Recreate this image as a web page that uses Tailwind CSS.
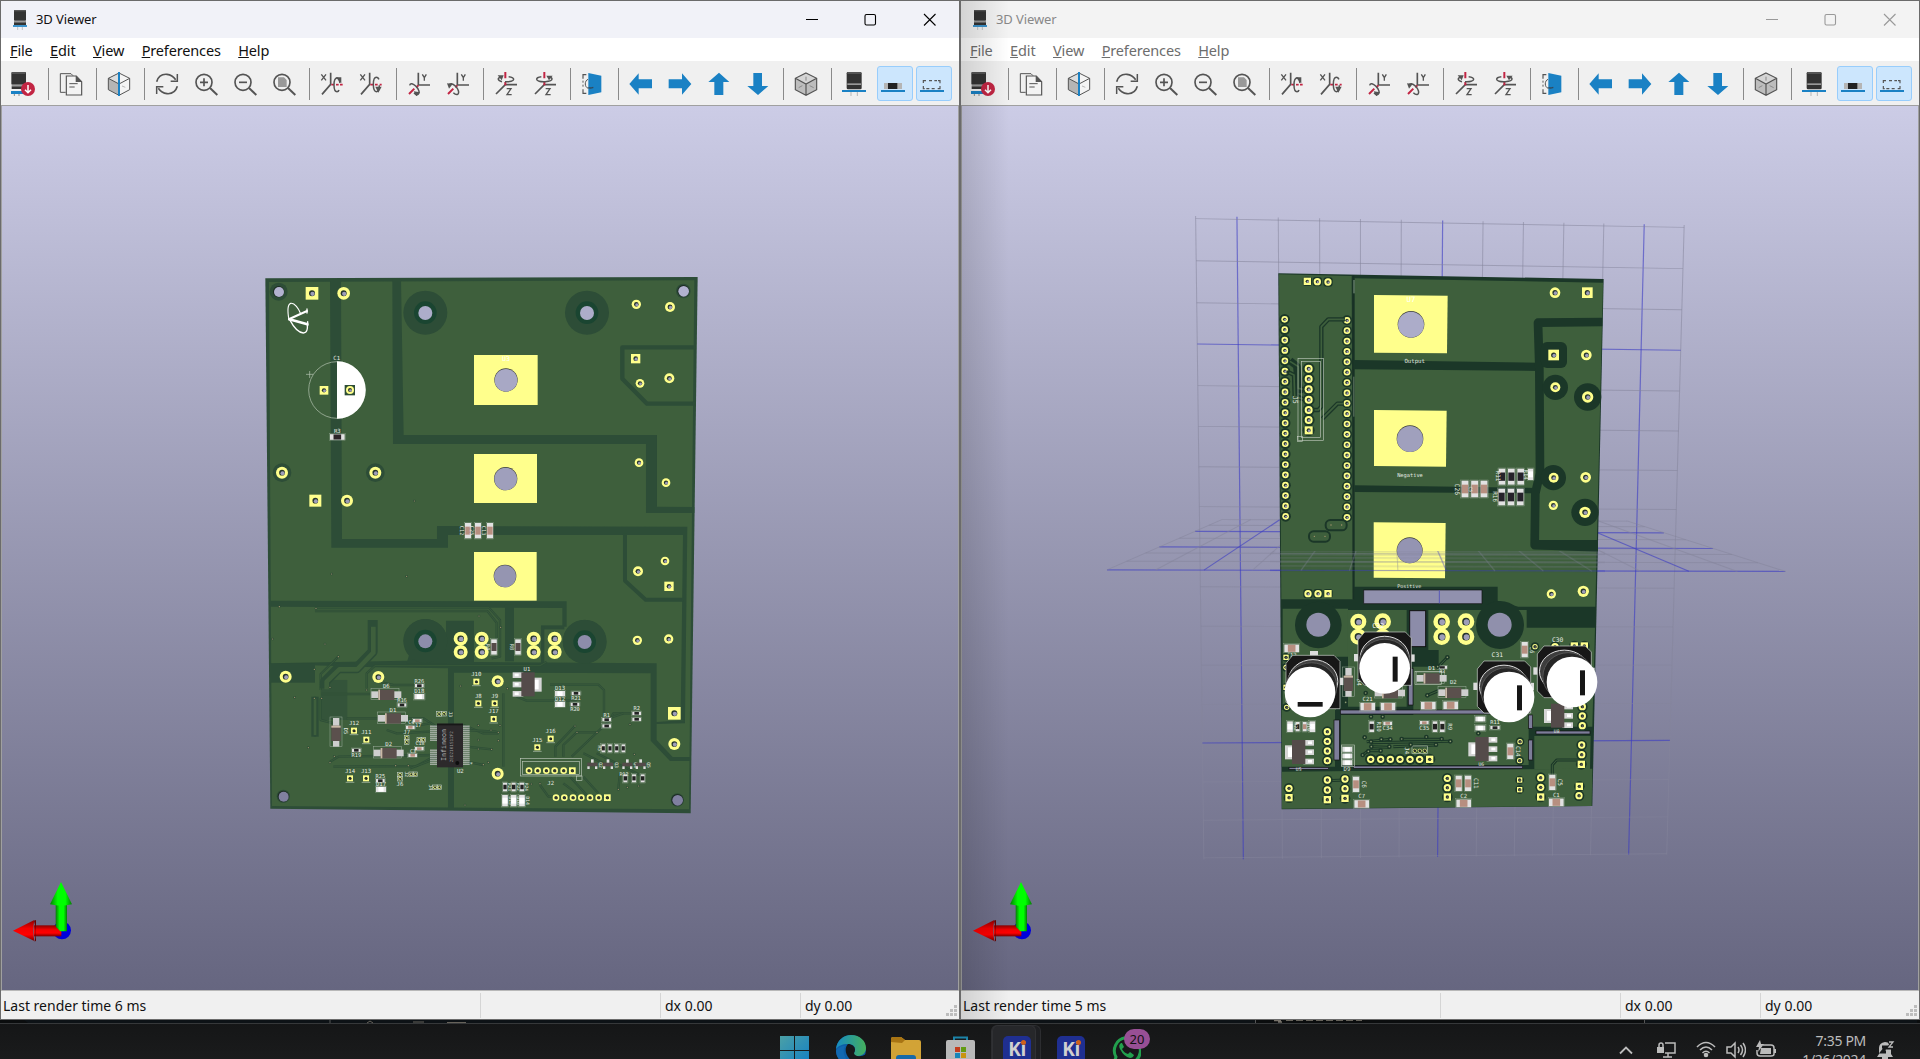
<!DOCTYPE html>
<html lang="en">
<head>
<meta charset="utf-8">
<title>3D Viewer</title>
<script src="https://cdn.jsdelivr.net/npm/@tailwindcss/browser@4"></script>
</head>
<body class="w-[1920px] h-[1059px] overflow-hidden bg-[#17181a] font-['Noto_Sans','Open_Sans',sans-serif]">
<template id="toolbar">
<!-- reload board -->
<svg class="w-6 h-6 mr-[15px] shrink-0 overflow-visible" viewBox="0 0 72 72"><rect x="1" y="0" width="44" height="38" rx="3" fill="#333"/><rect x="3" y="0" width="40" height="6" fill="#555"/><rect x="2" y="38" width="42" height="5" fill="#999"/><rect x="2" y="43" width="42" height="8" fill="#333"/><rect x="0" y="57" width="38" height="9" fill="#1a81c4"/><path d="M10 66v6M24 66v6" stroke="#888" stroke-width="3"/><circle cx="51" cy="51" r="21" fill="#c22543"/><path d="M51 39v22M42 53l9 9 9-9" stroke="#fff" stroke-width="4.5" fill="none"/></svg>
<i class="-ml-[2px] mr-[10px] w-px h-8 bg-[#8a8a8a] shrink-0"></i>
<svg class="w-6 h-6 mr-[15px] shrink-0" viewBox="0 0 72 72"><path d="M20 61H4V5h32l6 6" fill="none" stroke="#545454" stroke-width="3"/><path d="M22 12h30l16 17v40H22z" fill="#f3f3f3" stroke="#545454" stroke-width="3.5"/><path d="M50 11v19h19z" fill="#545454"/><path d="M31 35h25M31 45h16" stroke="#545454" stroke-width="3"/></svg>
<i class="-ml-[2px] mr-[10px] w-px h-8 bg-[#8a8a8a] shrink-0"></i>
<svg class="w-6 h-6 mr-[15px] shrink-0" viewBox="0 0 72 72"><path d="M36 3L4 19v34l32 17z" fill="#b5b5b5"/><path d="M36 3L4 19l32 16z" fill="#dedede"/><path d="M36 3l32 16v34L36 70z" fill="#f4f4f4"/><path d="M36 3l32 16v34L36 70 4 53V19zM4 19l32 17 32-17" fill="none" stroke="#545454" stroke-width="3"/><path d="M45 42l10 4" stroke="#999" stroke-width="2"/><path d="M36 0v72" stroke="#1a81c4" stroke-width="6"/></svg>
<i class="-ml-[2px] mr-[10px] w-px h-8 bg-[#8a8a8a] shrink-0"></i>
<svg class="w-6 h-6 mr-[15px] shrink-0" viewBox="0 0 72 72"><path d="M5 29C10 12 23 6 36 7c12 1 20 7 26 16M67 43C62 60 49 66 36 65 24 64 16 58 10 49" fill="none" stroke="#545454" stroke-width="5"/><path d="M67 6v22H47M5 66V44h20" fill="none" stroke="#545454" stroke-width="4.5"/></svg>
<svg class="w-6 h-6 mr-[15px] shrink-0" viewBox="0 0 72 72"><circle cx="30" cy="31" r="24" fill="none" stroke="#545454" stroke-width="5"/><path d="M48 48l22 21" stroke="#545454" stroke-width="6"/><path d="M30 19v24M18 31h24" stroke="#545454" stroke-width="5"/></svg>
<svg class="w-6 h-6 mr-[15px] shrink-0" viewBox="0 0 72 72"><circle cx="30" cy="31" r="24" fill="none" stroke="#545454" stroke-width="5"/><path d="M48 48l22 21" stroke="#545454" stroke-width="6"/><path d="M18 31h24" stroke="#545454" stroke-width="5"/></svg>
<svg class="w-6 h-6 mr-[15px] shrink-0" viewBox="0 0 72 72"><circle cx="30" cy="31" r="24" fill="none" stroke="#545454" stroke-width="5"/><path d="M48 48l22 21" stroke="#545454" stroke-width="6"/><path d="M18 16h18l8 8v21H18z" fill="#999"/></svg>
<i class="-ml-[2px] mr-[10px] w-px h-8 bg-[#8a8a8a] shrink-0"></i>
<svg class="w-6 h-6 mr-[15px] shrink-0" viewBox="0 0 72 72"><path d="M4 7l14 18M18 7L4 25" fill="none" stroke="#545454" stroke-width="4"/><path d="M32 2v35L6 67" fill="none" stroke="#545454" stroke-width="5"/><path d="M34 38h8M60 38h8" stroke="#c22543" stroke-width="5"/><path d="M60 33c-2-10-5-15-9-15-6 0-9 9-9 21s3 20 9 20c3 0 5-2 6-5" fill="none" stroke="#545454" stroke-width="4.5"/><path d="M48 38h8" stroke="#c22543" stroke-width="5"/><path d="M47 16h17v18z" fill="#545454"/></svg>
<svg class="w-6 h-6 mr-[15px] shrink-0" viewBox="0 0 72 72"><path d="M4 7l14 18M18 7L4 25" fill="none" stroke="#545454" stroke-width="4"/><path d="M32 2v35L6 67" fill="none" stroke="#545454" stroke-width="5"/><path d="M34 38h8M48 38h8M62 38h6" stroke="#c22543" stroke-width="5"/><path d="M60 22c-2-4-5-6-8-6-6 0-9 9-9 21s3 22 9 22c5 0 9-8 9-19" fill="none" stroke="#545454" stroke-width="4.5"/><path d="M49 44h19l-10 18z" fill="#545454"/></svg>
<i class="-ml-[2px] mr-[10px] w-px h-8 bg-[#8a8a8a] shrink-0"></i>
<svg class="w-6 h-6 mr-[15px] shrink-0" viewBox="0 0 72 72"><path d="M46 7l6 10v9M58 7l-6 10" fill="none" stroke="#545454" stroke-width="4"/><path d="M34 2v37h35" fill="none" stroke="#545454" stroke-width="5"/><path d="M34 40l-6 6M22 50L6 66" stroke="#c22543" stroke-width="6"/><path d="M8 40c2-8 10-6 19 3 9 8 12 20 6 24-3 2-8 0-12-4" fill="none" stroke="#545454" stroke-width="4.5"/><path d="M20 58l19 3-11 12z" fill="#545454"/></svg>
<svg class="w-6 h-6 mr-[15px] shrink-0" viewBox="0 0 72 72"><path d="M46 7l6 10v9M58 7l-6 10" fill="none" stroke="#545454" stroke-width="4"/><path d="M34 2v37h35" fill="none" stroke="#545454" stroke-width="5"/><path d="M34 40l-6 6M22 50L6 66" stroke="#c22543" stroke-width="6"/><path d="M8 40c4-8 12-6 20 2 9 9 13 20 7 25-4 2-9-1-13-5" fill="none" stroke="#545454" stroke-width="4.500"/><path d="M3 34l17 2-11 14z" fill="#545454"/></svg>
<i class="-ml-[2px] mr-[10px] w-px h-8 bg-[#8a8a8a] shrink-0"></i>
<svg class="w-6 h-6 mr-[15px] shrink-0" viewBox="0 0 72 72"><path d="M38 50h13L39 68h14" fill="none" stroke="#545454" stroke-width="4"/><path d="M69 38H34L6 66" fill="none" stroke="#545454" stroke-width="5"/><path d="M34 0v19M34 30v10" stroke="#c22543" stroke-width="6"/><path d="M24 29c-8-2-12-5-11-9 1-3 5-5 12-6M44 14c10 1 15 4 15 8 0 5-11 8-26 7" fill="none" stroke="#545454" stroke-width="4.5"/><path d="M11 10h18l-6 15z" fill="#545454"/></svg>
<svg class="w-6 h-6 mr-[15px] shrink-0" viewBox="0 0 72 72"><path d="M38 50h13L39 68h14" fill="none" stroke="#545454" stroke-width="4"/><path d="M69 38H34L6 66" fill="none" stroke="#545454" stroke-width="5"/><path d="M34 0v19M34 30v10" stroke="#c22543" stroke-width="6"/><path d="M25 14c-10 1-14 4-14 8 0 5 11 8 26 7 12-1 20-4 20-8 0-3-3-5-8-6" fill="none" stroke="#545454" stroke-width="4.5"/><path d="M40 11h19l-11 14z" fill="#545454"/></svg>
<i class="-ml-[2px] mr-[10px] w-px h-8 bg-[#8a8a8a] shrink-0"></i>
<svg class="w-6 h-6 mr-[15px] shrink-0" viewBox="0 0 72 72"><path d="M16 8H6v12M6 52v12h10" fill="none" stroke="#545454" stroke-width="3.5"/><path d="M22 3l39 8v50l-39 8z" fill="#1a81c4"/><path d="M21 22C10 26 10 46 22 49M6 26v6M6 38v6" stroke="#545454" stroke-width="3" fill="none"/><path d="M22 47c6 2 10 1 15-1" stroke="#354b5c" stroke-width="4" fill="none"/></svg>
<i class="-ml-[2px] mr-[10px] w-px h-8 bg-[#8a8a8a] shrink-0"></i>
<svg class="w-6 h-6 mr-[15px] shrink-0" viewBox="0 0 72 72"><path d="M1 36L29 4v18h40v27H29v19z" fill="#1a81c4"/></svg>
<svg class="w-6 h-6 mr-[15px] shrink-0" viewBox="0 0 72 72"><path d="M70 36L42 4v18H2v27h40v19z" fill="#1a81c4"/></svg>
<svg class="w-6 h-6 mr-[15px] shrink-0" viewBox="0 0 72 72"><path d="M36 2L4 30h18v39h27V30h18z" fill="#1a81c4"/></svg>
<svg class="w-6 h-6 mr-[15px] shrink-0" viewBox="0 0 72 72"><path d="M36 69L4 42h18V3h26v39h19z" fill="#1a81c4"/></svg>
<i class="-ml-[2px] mr-[10px] w-px h-8 bg-[#8a8a8a] shrink-0"></i>
<svg class="w-6 h-6 mr-[15px] shrink-0" viewBox="0 0 72 72"><path d="M36 3l32 16v34L36 70 4 53V19z" fill="#bdbdbd"/><path d="M36 3l32 16-32 17L4 19z" fill="#d5d5d5"/><path d="M36 3l32 16v34L36 70 4 53V19zM4 19l32 17 32-17M36 36v34" fill="none" stroke="#545454" stroke-width="3.5"/><path d="M36 14v12M14 47l11-6M47 41l12 6" stroke="#8b8b8b" stroke-width="3"/></svg>
<i class="-ml-[2px] mr-[10px] w-px h-8 bg-[#8a8a8a] shrink-0"></i>
<svg class="w-6 h-6 mr-[15px] shrink-0" viewBox="0 0 72 72"><rect x="14" y="0" width="45" height="52" rx="4" fill="#333"/><rect x="16" y="34" width="41" height="5" fill="#999"/><rect x="16" y="0" width="41" height="6" fill="#555"/><path d="M27 56v16M46 56v16" stroke="#b5b5b5" stroke-width="3"/><path d="M0 57h72" stroke="#1a81c4" stroke-width="6"/></svg>
<div class="-ml-1 mr-[3px] w-9 h-[35px] shrink-0 rounded-[3px] border border-[#98cdfc] bg-[#cce6fd] pl-[3px] pt-[5px]"><svg class="w-6 h-6" viewBox="0 0 72 72"><rect x="9" y="33" width="54" height="18" fill="#b5b5b5"/><rect x="21" y="33" width="28" height="18" fill="#222"/><path d="M0 57h72" stroke="#1a81c4" stroke-width="6"/></svg></div>
<div class="w-9 h-[35px] shrink-0 rounded-[3px] border border-[#98cdfc] bg-[#cce6fd] pl-[3px] pt-[5px]"><svg class="w-6 h-6" viewBox="0 0 72 72"><path d="M10 33v-7h8M27 26h9M43 26h8M54 26h6v8M60 42v8h-7M44 50h-9M28 50h-9M14 50h-4v-8" fill="none" stroke="#545454" stroke-width="3.5"/><path d="M0 57h72" stroke="#1a81c4" stroke-width="6"/></svg></div>
</template>

<main class="flex h-[1020px]">
<section class="relative flex w-[960px] flex-col border border-[#6b6b6b] bg-[#f0f0f0]">
  <header class="flex h-[37px] shrink-0 items-center bg-[#f1f2f8] pl-3">
    <svg class="w-[14px] h-5" viewBox="0 0 42 60"><rect x="3" width="36" height="32" rx="2" fill="#333"/><rect x="3" width="36" height="4" fill="#555"/><rect x="3" y="33" width="36" height="4" fill="#999"/><rect x="3" y="37" width="36" height="8" fill="#333"/><path d="M0 48h42" stroke="#1a81c4" stroke-width="5"/><path d="M14 51v9M28 51v9" stroke="#aaa" stroke-width="2"/></svg>
    <span class="ml-[9px] text-[13px] leading-none tracking-[-0.1px] text-[#111]">3D Viewer</span>
    <svg class="ml-auto mr-[22px] h-4 w-[131px]" viewBox="0 0 131 16" fill="none" stroke="#000" stroke-width="1.1"><path d="M0 7.5h12M118 2l11.500 11.500M129.500 2L118 13.500"/><rect x="59" y="2.500" width="10.500" height="10.500" rx="1.500"/></svg>
  </header>
  <nav class="flex h-[23px] shrink-0 items-center gap-[17.500px] bg-white pl-[9px] pt-[2px] text-[14.500px] leading-none tracking-[-0.15px] text-[#111]"><span><u>F</u>ile</span><span><u>E</u>dit</span><span><u>V</u>iew</span><span><u>P</u>references</span><span><u>H</u>elp</span></nav>
  <div class="tools flex h-[45px] shrink-0 items-center border-b border-[#a0a0a0] pl-[10px] pt-px"></div>
  <div class="h-[884px] shrink-0 border-x border-[#a0a0a0] bg-gradient-to-b from-[#cccce6] to-[#666680]"><svg id="left" class="h-full w-full" viewBox="2 106 956 884"></svg></div>
  <footer class="flex h-[28px] shrink-0 items-center border-t border-[#b8b8b8] pt-px text-[14px] leading-[25px] text-[#111]"><div class="h-[25px] w-[480px] border-r border-[#d5d5d5] pl-[2px]">Last render time 6 ms</div><div class="h-[25px] w-[180px] border-r border-[#d5d5d5]"></div><div class="h-[25px] w-[140px] border-r border-[#d5d5d5] pl-1">dx 0.00</div><div class="h-[25px] pl-1">dy 0.00</div><svg class="ml-auto mr-px mt-3 h-[12px] w-[12px]" viewBox="0 0 12 12" fill="#bdbdbd"><path d="M8 0h3v3H8zM8 4h3v3H8zM8 8h3v3H8zM4 4h3v3H4zM4 8h3v3H4zM0 8h3v3H0z"/></svg></footer>
</section>
<section class="relative flex w-[960px] flex-col border border-[#6b6b6b] bg-[#f0f0f0]">
  <header class="flex h-[37px] shrink-0 items-center bg-[#f3f3f3] pl-3">
    <svg class="w-[14px] h-5" viewBox="0 0 42 60"><rect x="3" width="36" height="32" rx="2" fill="#333"/><rect x="3" width="36" height="4" fill="#555"/><rect x="3" y="33" width="36" height="4" fill="#999"/><rect x="3" y="37" width="36" height="8" fill="#333"/><path d="M0 48h42" stroke="#1a81c4" stroke-width="5"/><path d="M14 51v9M28 51v9" stroke="#aaa" stroke-width="2"/></svg>
    <span class="ml-[9px] text-[13px] leading-none tracking-[-0.1px] text-[#888]">3D Viewer</span>
    <svg class="ml-auto mr-[22px] h-4 w-[131px]" viewBox="0 0 131 16" fill="none" stroke="#999" stroke-width="1.1"><path d="M0 7.500h12M118 2l11.500 11.500M129.500 2L118 13.500"/><rect x="59" y="2.500" width="10.500" height="10.500" rx="1.500"/></svg>
  </header>
  <nav class="flex h-[23px] shrink-0 items-center gap-[17.500px] bg-white pl-[9px] pt-[2px] text-[14.500px] leading-none tracking-[-0.15px] text-[#6d6d6d]"><span><u>F</u>ile</span><span><u>E</u>dit</span><span><u>V</u>iew</span><span><u>P</u>references</span><span><u>H</u>elp</span></nav>
  <div class="tools flex h-[45px] shrink-0 items-center border-b border-[#a0a0a0] pl-[10px] pt-px"></div>
  <div class="h-[884px] shrink-0 border-x border-[#a0a0a0] bg-gradient-to-b from-[#cccce6] to-[#666680]"><svg id="right" class="h-full w-full" viewBox="962 106 956 884"></svg></div>
  <footer class="flex h-[28px] shrink-0 items-center border-t border-[#b8b8b8] pt-px text-[14px] leading-[25px] text-[#111]"><div class="h-[25px] w-[480px] border-r border-[#d5d5d5] pl-[2px]">Last render time 5 ms</div><div class="h-[25px] w-[180px] border-r border-[#d5d5d5]"></div><div class="h-[25px] w-[140px] border-r border-[#d5d5d5] pl-1">dx 0.00</div><div class="h-[25px] pl-1">dy 0.00</div><svg class="ml-auto mr-px mt-3 h-[12px] w-[12px]" viewBox="0 0 12 12" fill="#bdbdbd"><path d="M8 0h3v3H8zM8 4h3v3H8zM8 8h3v3H8zM4 4h3v3H4zM4 8h3v3H4zM0 8h3v3H0z"/></svg></footer>
  <div class="absolute inset-y-0 left-0 w-12 bg-gradient-to-r from-black/13 to-transparent"></div>
</section>
</main>
<!-- strip of the window that lies behind -->
<svg class="block h-1 w-[1920px]" viewBox="0 0 1920 4"><rect width="1920" height="4" fill="#0b0d0e"/><path d="M24 0h1231v3H28zM1645 0h272v3h-272z" fill="#0d1216"/><path d="M0 3.500h1920" stroke="#36383a"/><path d="M330 0v3M1255.500 0v3M1644.500 0v3" stroke="#555"/><path d="M367 3l3-2 3 2M413 2h11M447 2.500h19" stroke="#66625a" fill="none"/><path d="M1274 0.500h7M1278 2h4" stroke="#77726a" stroke-width="1.500"/><path d="M1286 .5h76" stroke="#66625a" stroke-dasharray="7 3"/></svg>
<div class="flex h-[35px] overflow-hidden bg-gradient-to-b from-[#151617] to-[#1a1b1c] pl-[767px]">
  <div class="w-[55px] shrink-0 pl-[13px] pt-3"><svg class="h-[29px] w-[29px]" viewBox="0 0 29 29"><defs><linearGradient id="w" x2="1" y2="1"><stop stop-color="#4ba0a6"/><stop offset="1" stop-color="#127fc5"/></linearGradient></defs><path d="M0 0h14v14H0zM15 0h14v14H15zM0 15h14v14H0zM15 15h14v14H15z" fill="url(#w)"/></svg></div>
  <div class="w-[55px] shrink-0 pl-[14px] pt-[11px]"><svg class="h-[30px] w-[30px]" viewBox="0 0 30 30"><defs><linearGradient id="e" x2="1"><stop stop-color="#168bc4"/><stop offset="1" stop-color="#45b05c"/></linearGradient></defs><circle cx="15" cy="15" r="15" fill="#0c5fa8"/><path d="M0 14C1 5 8 0 15 0c9 0 15 6 15 13 0 5-4 8-8 8-3 0-5-1-4-3 3-5 0-9-6-9C6 9 2 11 0 14z" fill="url(#e)"/><path d="M18 18c3-5-1-9-6-9-4 4-3 12 4 17h14v-7c-6 4-12 2-12-1z" fill="#17181a"/><path d="M9 11c-4 7 1 17 12 18l-6 1C6 30 0 23 0 16c1-3 5-5 9-5z" fill="#1268b1"/></svg></div>
  <div class="w-[55px] shrink-0 pl-[14px] pt-3"><svg class="h-[28px] w-[30px]" viewBox="0 0 30 28"><path d="M0 3q0-2 2-2h8l4 3h14q2 0 2 2v22H0z" fill="#d2a336"/><path d="M0 6V3q0-2 2-2h8l4 3-3 3z" fill="#a87413"/><path d="M5 22q0-3 3-3h14q3 0 3 3v6H5z" fill="#1769a7"/></svg></div>
  <div class="w-[55px] shrink-0 pl-[14px] pt-3"><svg class="h-[28px] w-[29px]" viewBox="0 0 29 28"><path d="M8 6V1.500h13V6" fill="none" stroke="#1c83a8" stroke-width="2"/><path d="M0 6q0-2 2-2h25q2 0 2 2v22H0z" fill="#b9b9b9"/><path d="M9 11h5v5H9z" fill="#c43d1e"/><path d="M15 11h5v5h-5z" fill="#629b12"/><path d="M9 17h5v5H9z" fill="#1785b8"/><path d="M15 17h5v5h-5z" fill="#c9940f"/></svg></div>
  <div class="relative w-[55px] shrink-0 pl-[4px] pt-px"><div class="h-[34px] w-[50px] rounded-t-md border border-b-0 border-[#2c2d30] bg-[#1e1f22]"><div class="-mt-px h-[34px] w-11 rounded-t-md border border-b-0 border-[#303134] bg-[#26272a] pl-[10px] pt-[10px]"><div class="h-[23px] w-7 rounded-t-[5px] bg-[#1f2f91] pt-[3px] text-center font-['Open_Sans'] text-[19px] font-bold leading-[20px] tracking-[-0.5px] text-[#d0d0d0]">Ki</div></div></div><i class="absolute left-[34px] top-[16px] h-[5px] w-[5px] rounded-full bg-[#d0601a]"></i></div>
  <div class="relative w-[55px] shrink-0 pl-[15px] pt-3"><div class="h-[23px] w-7 rounded-t-[5px] bg-[#1f2f91] pt-[3px] text-center font-['Open_Sans'] text-[19px] font-bold leading-[20px] tracking-[-0.5px] text-[#d0d0d0]">Ki</div><i class="absolute left-[34px] top-[16px] h-[5px] w-[5px] rounded-full bg-[#d0601a]"></i></div>
  <div class="relative w-[55px] shrink-0 pl-[14px] pt-[11px]"><svg class="h-[30px] w-[30px]" viewBox="0 0 30 30"><path d="M3 28l2-6a13 13 0 1 1 5 5z" fill="#17181a" stroke="#22a04d" stroke-width="3"/><path d="M10 8q-3 2-1 6 4 8 10 9 3 0 4-3l-4-3-2 2q-4-1-6-5l2-2-2-4z" fill="#22a04d"/></svg><span class="absolute left-[27px] top-[5px] h-5 w-[26px] rounded-full bg-[#984f95] text-center text-[13px] leading-5 text-[#111]">20</span></div>
  <div class="ml-[467px] flex shrink-0">
    <svg class="mt-[21px] h-[10px] w-[14px]" viewBox="0 0 14 10"><path d="M1 8.500l6-6 6 6" fill="none" stroke="#bcbcbc" stroke-width="1.800"/></svg>
    <svg class="ml-6 mt-[17px] h-5 w-[19px]" viewBox="0 0 19 20" fill="none" stroke="#bcbcbc" stroke-width="1.500"><path d="M8 2h10v10H8M11 12v4M6 16h9M2 6V4q0-2 2-2t2 2v2"/><path d="M0 6h7v6H0z" fill="#bcbcbc" stroke="none"/></svg>
    <svg class="ml-5 mt-[17px] h-[17px] w-5" viewBox="0 0 20 17" fill="none" stroke="#bcbcbc" stroke-width="1.600"><path d="M1 6q9-9 18 0M4 9q6-6 12 0M6.500 12q3.500-3.500 7 0"/><circle cx="10" cy="14" r="1.500" fill="#bcbcbc"/></svg>
    <svg class="ml-[10px] mt-[17px] h-[18px] w-5" viewBox="0 0 20 18" fill="none" stroke="#bcbcbc" stroke-width="1.500"><path d="M1 6h4l4-4v14l-4-4H1zM12 6q2 3 0 6M14.500 4q4 5 0 10M17 2q5 7 0 14"/></svg>
    <svg class="ml-[10px] mt-[15px] h-[19px] w-5" viewBox="0 0 20 19"><path d="M7 6h8q3 0 3 3v6q0 2-3 2H4q-3 0-3-3v-3" fill="none" stroke="#bcbcbc" stroke-width="1.500"/><path d="M5 9h10v6H4zM18 10h2v4h-2zM4 1L0 8h3L2 13l6-8H5z" fill="#bcbcbc"/></svg>
    <div class="ml-6 w-[66px] pt-[7px] text-right text-[14px] leading-[19px] tracking-[-0.3px] text-[#bcbcbc]"><div>7:35 PM</div><div>1/26/2024</div></div>
    <svg class="ml-[11px] mt-4 h-5 w-[18px]" viewBox="0 0 18 20"><path d="M2 14V8q0-5 6-6 6 0 6 7v5l2 3H0z" fill="#bcbcbc"/><path d="M5 18h6" stroke="#bcbcbc" stroke-width="2"/><path d="M5 7h4l-4 5h4M11 2h5l-5 6h5" fill="none" stroke="#17181a" stroke-width="3"/><path d="M12 2h4l-4 5h4" fill="none" stroke="#bcbcbc" stroke-width="1.300"/></svg>
  </div>
</div>

<script>
document.querySelectorAll('.tools').forEach(t => t.append(document.getElementById('toolbar').content.cloneNode(true)));

// drawing helpers; board coordinates are three units per pixel
const LG='#3e5f3c', Y='#ffff8c';
const poly=(p,f,s='')=>`<polygon points="${p}" fill="${f}" ${s}/>`;
const line=(p,c,w)=>`<polyline points="${p}" fill="none" stroke="${c}" stroke-width="${w}" stroke-linejoin="round"/>`;
const rect=(x,y,w,h,f,s='')=>`<rect x="${x}" y="${y}" width="${w}" height="${h}" fill="${f}" ${s}/>`;
const circ=(x,y,r,f,s='')=>`<circle cx="${x}" cy="${y}" r="${r}" fill="${f}" ${s}/>`;
const pad=(x,y,r,sq,h=r*.42,hc='#9d9db8')=>(sq?rect(x-r,y-r,2*r,2*r,Y):circ(x,y,r,Y))+circ(x,y,h+1,'#26352c')+circ(x+1.5,y+1.500,h*.8,hc);
const text=(x,y,t,s=17,rot=0,f='#e4eae2')=>`<text x="${x}" y="${y}" font-size="${s}" fill="${f}" text-anchor="middle" font-family="DejaVu Sans Mono, monospace" ${rot?`transform="rotate(${rot} ${x} ${y})"`:''}>${t}</text>`;
// chip part with two end contacts, drawn from its centre
const chip=(x,y,w,h,body,vert,end='#e2e2e2')=>{const e=(vert?h:w)*.24;return rect(x-w/2-2,y-h/2-2,w+4,h+4,'none','stroke="#9fb09f" stroke-width="1"')+rect(x-w/2,y-h/2,w,h,end)+(vert?rect(x-w/2+1,y-h/2+e,w-2,h-2*e,body):rect(x-w/2+e,y-h/2+1,w-2*e,h-2,body));};
const diode=(x,y,vert)=>vert?rect(x-18,y-44,36,88,'none','stroke="#9fb09f" stroke-width="1.5"')+rect(x-9,y-41,19,86,'#cfcfcf')+rect(x-14,y-18,28,46,'#5b504d')+rect(x-14,y-18,28,6,'#c9b9a6'):rect(x-46,y-20,84,34,'none','stroke="#9fb09f" stroke-width="1.5"')+rect(x-45,y-11,90,20,'#cfcfcf')+rect(x-24,y-16,48,31,'#5b504d')+rect(x-24,y-16,5,31,'#c9b9a6');
const sot=(x,y,flip)=>{const s=flip?-1:1,b=(a,w)=>s>0?x+a:x-a-w;return [-28,0,28].map(d=>rect(b(-46,32),y+d-8,32,17,'#d5d5d5')+rect(b(-40,12),y+d-4,12,8,'#fff')).join('')+rect(b(14,27),y-20,27,42,'#d5d5d5')+rect(b(18,14),y-14,14,29,'#fff')+rect(x-20,y-36,40,72,'#544b4a')};
const box=(x,y,w,h)=>rect(x,y,w,h,'none','stroke="#c7d0c4" stroke-width="1.8"');

function leftBoard(){
 const D='#2d4d37'; let s='<g transform="translate(250 270) scale(.33333)">';
 s+=poly('46,25 1343,21 1322,1630 61,1616',D)+poly('57,36 1333,31 1317,1618 66,1608',LG);
 s+=poly('240,28 273,28 276,807 561,807 561,768 1312,770 1305,1350 1292,1350 1299,795 594,795 594,833 244,833',D);
 s+=poly('427,28 453,28 461,495 1221,495 1221,710 1333,711 1333,729 1188,729 1188,522 429,522',D);
 s+=line('1338,232 1117,232 1117,326 1191,401 1335,401',D,13)+line('1125,790 1125,932 1187,989 1302,989',D,12);
 s+=poly('60,992 950,994 950,1070 937,1070 937,1014 60,1010',D)+rect(765,1004,27,170,D);
 s+=poly('588,1052 672,1052 672,1176 1220,1180 1220,1356 1305,1350 1305,1360 1220,1362 1220,1410 1268,1461 1322,1461 1322,1473 1260,1473 1202,1412 1202,1210 612,1208 612,1614 594,1614 594,1195 380,1192 60,1182 60,1180 588,1170',D);
 s+=circ(526,1112,65,D)+circ(1004,1115,65,D)+rect(873,1066,70,12,D)+rect(873,1070,10,110,D)+rect(60,1182,135,56,D)+poly('490,1110 590,1110 590,1180 470,1180',D)+rect(212,1230,80,120,'#34543a');
 // routed traces
 s+='<g opacity=".9">';
 ['195,1013 717,1013 750,1050 750,1160 725,1165','195,1023 712,1023 740,1058 740,1140','265,1160 212,1212 212,1260','350,1255 350,1210 375,1187 870,1187 890,1175','212,1285 212,1350 270,1365','195,1280 195,1400','215,1272 360,1272','290,1345 520,1345 560,1370','240,1475 265,1460 560,1455','250,1490 500,1488 560,1455','480,1495 560,1465','760,1270 760,1490','800,1280 830,1292 980,1292','900,1244 1045,1244 1062,1260 1062,1330','916,1460 916,1430 975,1368','940,1460 940,1425 980,1387 1040,1387','965,1460 1080,1350 1090,1330 1145,1330','1062,1350 1120,1330','870,1545 895,1580 1070,1580','940,1540 980,1570','960,1520 1010,1575','1000,1520 1045,1570','640,1365 700,1390 745,1390','640,1380 740,1385','650,1430 725,1438','650,1475 700,1485','385,1235 430,1245 500,1245','1060,1480 1000,1450','1180,1520 1100,1480 1040,1450','1105,1555 1110,1510','480,1370 540,1360','410,1380 440,1390 540,1385'].forEach(p=>s+=line(p,D,7)+line(p,LG,2));
 s+='</g>'+line('368,1050 368,1145 320,1195 265,1195 225,1235 225,1255',D,30)+line('370,1070 370,1148 322,1198 268,1198 230,1235 230,1258',LG,14);
 s+=line('195,1280 195,1400',D,22)+line('195,1285 195,1395',LG,8);
 [[86,65,27,16,'#b2b2d0'],[1300,63,22,17,'#b2b2d0'],[100,1579,20,16,'#8080a0'],[1282,1590,20,17,'#8080a0']].forEach(a=>s+=circ(a[0],a[1],a[2],D)+circ(a[0],a[1],a[3]+1,'#1d2b24')+circ(a[0]+1,a[1]+1,a[3]-1,a[4]));
 [[526,128],[1011,128],[526,1113],[1004,1115]].forEach(([x,y])=>s+=circ(x,y,66,D)+circ(x,y,34,'#1a4531')+circ(x,y+1,21,y<500?'#adadca':'#8d8dab'));
 [[672,255,191,150,768,330,34,'#a8a8c5'],[672,552,189,147,767,626,34,'#9f9fbc'],[672,846,188,146,765,918,33,'#9595b1']].forEach(a=>s+=rect(a[0],a[1],a[2],a[3],Y)+circ(a[4],a[5],a[6]+1,'#3b3d3c')+circ(a[4],a[5]+1,a[6],a[7]));
 s+=text(768,272,'U3',20,0,'#fff');
 // board logo, a script letter laid on its side
 s+='<g fill="none" stroke="#fff" stroke-linecap="round"><path d="M171 123L118 147" stroke-width="6"/><path d="M118 148L172 163" stroke-width="8"/><path d="M117 150C113 128 111 104 122 100c12-2 24 16 30 31" stroke-width="3.500"/><path d="M119 149C130 170 146 188 160 189c12 0 13-14 12-26" stroke-width="4"/><path d="M171 117v12M173 155v12" stroke-width="4"/></g>';
 s+=circ(261,360,85,'none','stroke="#b8c7b5" stroke-width="2"')+'<path d="M261 274A86 86 0 0 1 261 446z" fill="#fff"/>'+line('168,313 190,313','#b8c7b5',2)+line('179,303 179,324','#b8c7b5',2)+rect(284,345,31,31,D);
 s+=text(260,269,'C1')+text(262,488,'R3')+chip(262,501,44,17,'#2b2529')+circ(96,608,28,D)+circ(376,608,28,D);
 [[186,70,19,1],[281,70,19],[1159,103,14],[1260,111,15],[1157,266,14,1],[1170,340,13],[1258,325,15],[222,361,13,1],[300,360,12],[96,608,18],[376,608,18],[196,692,18,1],[291,692,18],[1167,578,13],[1248,638,13],[1164,904,15],[1245,873,13],[1257,949,14,1],[1162,1111,14],[1256,1107,14],[107,1220,18],[385,1221,18],[743,1234,18],[743,1511,18],[1273,1330,19,1],[1273,1422,18],[632,1106,21],[632,1146,21],[695,1106,21],[695,1146,21],[851,1106,21],[851,1146,21],[914,1106,21],[914,1146,21]].forEach(a=>s+=pad(a[0],a[1],a[2],a[3]));
 [['J10',679,1235],['J8',685,1300],['J9',734,1300],['J17',731,1347],['J12',312,1382],['J11',349,1409],['J14',300,1525],['J13',348,1525],['J15',862,1432],['J16',902,1406]].forEach(([t,x,y])=>s+=pad(x,y,9,1,3.500,'#222')+text(x,y-17,t,17)+line(`${x-13},${y+12} ${x+13},${y+12}`,'#b8c7b5',2));
 [654,684,720].forEach((x,i)=>s+=chip(x,782,18,46,'#b78f80',1)+text(x-23,782,['C12','C25','C13'][i],16,90));
 s+=chip(732,1131,17,46,'#554a48',1)+chip(804,1131,17,46,'#554a48',1)+text(780,1131,'R8',16,90)+text(709,1131,'R4',16,90);
 s+=diode(409,1275)+text(409,1254,'D6')+diode(429,1346)+text(429,1325,'D1')+diode(416,1450)+text(416,1428,'D2')+diode(258,1385,1)+text(281,1383,'D5',16,90);
 s+=sot(834,1243)+text(831,1202,'U1');
 [['R26',508,1247],['R16',456,1305],['R25',391,1532],['R1',1070,1349],['R2',1160,1330],['',1070,1368],['',1160,1348]].forEach(([t,x,y])=>s+=chip(x,y,26,10,'#222')+text(x,y-9,t,16));
 [['R19',319,1441],['R21',978,1270],['R20',975,1303]].forEach(([t,x,y])=>s+=chip(x,y,26,10,'#222')+text(x,y+19,t,16));
 [['D18',508,1280],['D17',393,1558],['D13',930,1271],['D12',930,1303]].forEach(([t,x,y])=>s+=chip(x,y,30,16,'#fff')+text(x,y-11,t,17));
 [[502,1352],[481,1372],[508,1436],[488,1456]].forEach(([x,y])=>s+=chip(x,y,26,10,'#b78f80'));
 s+=text(484,1361,'C4',15)+text(505,1370,'17',15)+text(510,1426,'C18',15)+text(489,1449,'C3',15)+text(470,1391,'J7')+text(450,1549,'J6')+text(536,1552,'J4',14,90)+text(597,1333,'J3',14,90)+text(466,1513,'J2',14,90);
 [[567,1332],[582,1331],[470,1403],[470,1416],[508,1409],[520,1409],[484,1513],[496,1513],[450,1514],[450,1526],[555,1552],[568,1552]].forEach(([x,y])=>s+=pad(x,y,5,0,2,'#222')+box(x-7,y-7,14,14));
 // motor driver
 for(let i=0;i<20;i++){const y=1367+i*6; if(i<8||i>11)s+=rect(540,y,21,3,'#d0d0d0'); s+=rect(638,y,21,3,'#d0d0d0')}
 s+=rect(561,1361,78,131,'#2c292b')+rect(561,1361,78,5,'#171717')+circ(622,1479,6,'#0d0d0d')+text(589,1425,'Infineon',20,-90,'#b8b8b8')+text(609,1430,'2ED2101S12F2',13,-90,'#999')+text(631,1510,'U2')+text(664,1487,'*',16);
 // connectors
 s+=box(811,1466,184,52)+box(818,1474,170,40)+box(980,1518,16,13);
 [837,863,889,914,941,967].forEach((x,i)=>s+=pad(x,1502,10,i==5,4,'#333'));
 s+=text(902,1544,'J2');[918,943,969,994,1020,1046,1072].forEach((x,i)=>s+=pad(x,1583,10,i==6,4,'#333'));
 [765,791,816].forEach((x,i)=>s+=chip(x,1551,12,26,'#222',1)+chip(x,1592,17,34,'#fff',1)+text(x+9,1551,['R23','R22','R24'][i],13,90)+text(x+11,1592,['D15','D16','D14'][i],14,90));
 [1060,1080,1100,1120].forEach((x,i)=>s+=chip(x,1435,11,24,'#222',1)+(i<1?text(x-16,1435,'R5',14,90):''));
 [1027,1074,1132,1172].forEach((x,i)=>s+=rect(x-15,1478,30,11,'#544b4a')+rect(x-4,1468,8,10,'#ddd')+rect(x-15,1489,7,8,'#ddd')+rect(x+8,1489,7,8,'#ddd')+text(x+20,1485,'Q'+(i+2),14,90));
 s+=text(1122,1519,'R12',15);[1126,1152,1178].forEach(x=>s+=chip(x,1525,12,24,'#222',1));
 // vias
 [[493,693],[245,912],[470,919],[88,1010],[198,1015],[68,1107],[225,1122],[265,1160],[193,1198],[240,1252],[350,1260],[193,1285],[215,1285],[134,1282],[175,1433],[253,1459],[240,1478],[645,1605],[685,1366],[723,1380],[745,1387],[685,1410],[745,1412],[685,1437],[725,1438],[750,1366],[715,1477],[700,1484],[632,1248],[687,1038],[772,1256],[752,1072],[975,1368],[981,1387],[1041,1387],[1140,1363],[1153,1453],[1105,1558],[1132,1552],[1166,1548],[844,1542],[870,1541],[437,1487],[475,1487]].forEach(([x,y])=>s+=circ(x,y,4,D)+circ(x,y,1.800,'#b09a72'));
 return s+'</g>';
}

function rightBoard(){
 const D='#1b3728', B='#3a3ac4'; let s='<g transform="translate(1090 200) scale(.45918 .43367)">';
 const top=[230,320,410,500,589,678,768,856,944,1032,1119,1207,1294], bot=[248,334,419,504,589,673,757,841,924,1007,1090,1173,1256];
 const ln=(x1,y1,x2,y2,c,w,o)=>`<line x1="${x1}" y1="${y1}" x2="${x2}" y2="${y2}" stroke="${c}" stroke-width="${w}" opacity="${o}"/>`;
 const blue=(a,b,c,d)=>ln(a,b,c,d,B,2.6,.6), gray=(a,b,c,d)=>ln(a,b,c,d,'#85859c',2.200,.55);
 top.forEach((x,i)=>s+=([1,6,11].includes(i)?blue:gray)(x,37+i*1.7,bot[i],1521-i));
 [43,140,237,332,428,522,615,707,800,892,983,1073,1163,1252,1342,1430,1517].forEach((y,i)=>{const k=(y-43)/1474;s+=([3,13].includes(i)?blue:gray)(230+18*k,y,1294-38*k,y*.98+21-(i==13?2:0))});
 const floor=(y0)=>{let o='';const at=(y,side)=>side?1168+(y-740)*2.97:287-(y-737)*2.155;
  [737,750,764,780,800,814,833,853].forEach((y,i)=>o+=([2,4,7].includes(i)?blue:gray)(at(y,0),y,at(y+3.500,1),y+3.500));
  for(let i=0;i<15;i++){o+=([2,7,12].includes(i)?blue:gray)(37+105.6*i,853+i*.27,287+63*i,737+i*.2)} return o};
 s+=floor()+'</g><g transform="translate(1260 260) scale(.33333)">';
 s+=poly('55,40 1031,57 997,1638 65,1648',D)+poly('57,43 275,48 279,1018 64,1018',LG)+poly('284,55 1029,68 1006,1040 775,1040 713,1022 713,980 284,980',LG);
 s+=poly('68,1046 264,1046 264,1190 228,1190 228,1350 68,1350',LG)+poly('264,1050 440,1050 440,1340 264,1340',LG)+poly('505,1050 800,1050 800,1103 1005,1103 997,1400 460,1400 460,1220 536,1220 536,1170 505,1170',LG);
 s+=poly('65,1350 225,1350 225,1520 66,1520',LG)+poly('243,1365 806,1365 806,1515 243,1515',LG)+poly('823,1428 992,1428 990,1528 823,1528',LG)+poly('66,1535 997,1526 995,1638 66,1646',LG);
 // isolation gaps
 s+=line('280,45 280,1018','#183025',5)+poly('280,300 840,308 840,333 280,328',D)+poly('283,676 840,684 840,700 283,696',D)+line('1027,186 834,188 838,320 840,640 826,700 824,855 1012,858',D,26);
 s+=poly('815,840 1014,840 1014,875 818,868',D);
 s+=`<rect x="843" y="246" width="78" height="78" rx="18" fill="${D}"/>`+circ(886,382,38,D)+circ(983,411,41,D)+circ(880,653,38,D)+circ(975,757,41,D);
 s+=circ(175,1095,70,D)+circ(720,1095,72,D)+circ(175,1094,36,'#9090ac')+circ(719,1094,36,'#9090ac');
 s+=poly('311,990 666,990 666,1031 311,1031','#9191ae','stroke="#111" stroke-width="2"')+rect(449,1052,48,108,'#8c8ca9','stroke="#111" stroke-width="3"')+line('538,991 538,1030','#5858b8',3);
 s+=rect(280,60,4,40,'#6b836e')+rect(280,350,3,120,'#667d68');
 // module headers
 for(let i=0;i<20;i++){const y=178+i*31.1;s+=circ(74+i*.15,y,16,D)+circ(261,y+3,15,D)+pad(74+i*.15,y,10,0,4)+pad(261,y+3,10,0,4)}
 s+=line('90,302 110,318 118,400',D,22)+line('80,335 104,345 104,400 130,418',D,10);
 ['255,178 205,178 184,200 184,440 175,450 150,450','250,431 232,431 187,476','90,304 115,320 115,385 140,390','88,338 102,345 104,410 140,420'].forEach(p=>s+=line(p,D,13)+line(p,LG,5));
 [326,357,388,419,450,480,511].forEach((y,i)=>s+=circ(146,y,18,D)+pad(146,y,12,i==6,5));
 s+=box(114,295,76,247)+box(124,304,58,229)+box(112,530,16,14)+text(98,419,'J5',20,90);
 [[142,64,1],[172,65,0],[204,66,0],[144,1001,0],[174,1001,0],[204,1001,1]].forEach(([x,y,q])=>s+=rect(x-14,y-14,28,28,D,'rx="9"')+pad(x,y,11,q,4));
 [[197,780],[147,814]].forEach(([x,y])=>s+=`<rect x="${x}" y="${y}" width="63" height="31" rx="14" fill="${LG}" stroke="${D}" stroke-width="6"/>`+circ(x+16,y+15,2,'#b09a72')+circ(x+48,y+15,2,'#b09a72'));
 [[342,105,221,175,453,193,39,'#acacc9'],[342,450,218,170,450,536,39,'#a0a0bd'],[341,787,216,168,449,871,38,'#9494b2']].forEach(a=>s+=poly(`${a[0]},${a[1]} ${a[0]+a[2]},${a[1]+2} ${a[0]+a[2]-2},${a[1]+a[3]} ${a[0]},${a[1]+a[3]-2}`,Y)+circ(a[4],a[5],a[6]+1,'#3b3d3c')+circ(a[4],a[5]+1,a[6],a[7]));
 s+=text(453,125,'U7',22,0,'#fff')+text(464,310,'Output',17)+text(450,651,'Negative',16)+text(448,983,'Positive',15);
 [[885,98,16],[982,98,16,1],[881,285,16,1],[979,285,16],[886,382,15],[983,411,17],[881,653,15],[977,652,16],[880,736,14],[975,757,17],[874,1002,14],[970,994,17],[295,1085,24],[295,1130,24],[368,1085,25],[368,1130,24],[545,1085,25],[545,1130,25],[618,1085,25],[618,1130,25]].forEach(a=>s+=pad(a[0],a[1],a[2],a[3]));
 [615,644,672].forEach(x=>s+=chip(x,687,21,50,'#b78f80',1));s+=text(586,688,'C26',19,90)+text(626,688,'C5',14,90);
 [726,754,782].forEach(x=>s+=chip(x,650,20,48,'#25222a',1)+chip(x-1,711,20,50,'#25222a',1));s+=chip(812,643,16,34,'#fff',1)+text(698,710,'R16',18,90)+text(707,648,'R11',18,90)+text(792,644,'R14',17,90);
 // lower half
 s+='</g><g transform="translate(1260 550) scale(.33333)">';
 [[241,480,560,12],[222,510,16,120],[806,495,12,40],[806,570,12,60],[828,543,162,9],[280,648,508,7],[87,652,119,6],[445,355,14,110]].forEach(a=>s+=rect(...a,'#7d7d99','stroke="#111" stroke-width="2"'));
 ['320,575 390,568','333,578 570,574','425,568 545,568','335,590 388,592','308,615 325,602 362,602','400,590 530,585','535,350 562,322','505,435 540,420','200,692 255,690','877,675 877,645 890,630 965,630'].forEach(p=>s+=line(p,D,9)+line(p,LG,3));
 const cap=(x,y,w,h,tx,ty,bar,px,py)=>rect(px,py,24,22,'#ddd')+rect(x+w-6,y+h*.42,16,22,'#ddd')+poly(`${x+20},${y} ${x+w-18},${y} ${x+w},${y+18} ${x+w},${y+h} ${x+20},${y+h} ${x},${y+h-20} ${x},${y+24}`,'#171717','stroke="#cfd4cf" stroke-width="2"')+`<ellipse cx="${x+w/2}" cy="${y+h*.49}" rx="${w*.46}" ry="${h*.41}" fill="#3d3d3d" stroke="#ddd" stroke-width="3"/><ellipse cx="${(x+w/2+tx)/2}" cy="${(y+h*.49+ty)/2}" rx="76" ry="72" fill="#262626" stroke="#555" stroke-width="3"/>`+circ(tx,ty,76,'#fff')+(bar?rect(tx-37,ty+30,75,14,'#161616'):rect(tx+24,ty-35,15,75,'#161616'));
 s+=diode(265,395,1)+text(290,397,'D4',18,90)+diode(390,430)+diode(515,386)+text(515,360,'D1')+diode(580,429)+text(580,403,'D2')+box(465,364,80,40)+chip(547,352,28,9,'#222')+text(547,369,'R3',14);
 [[95,295],[323,470],[384,470],[505,467],[572,466],[305,762],[611,760],[889,757]].forEach(([x,y])=>s+=chip(x,y,44,23,'#b78f80'));
 [[794,299],[288,703],[596,700],[624,700],[877,697],[751,604]].forEach(([x,y])=>s+=chip(x,y,19,46,'#b78f80',1));
 s+=text(95,321,'C12')+text(323,452,'C21')+text(305,743,'C7')+text(611,743,'C2')+text(889,740,'C1')+text(305,703,'C6',18,90)+text(641,700,'C11',18,90)+text(893,697,'C5',18,90)+text(768,604,'C14',18,90)+text(809,300,'C6',17,90);
 s+=sot(893,497,1)+sot(116,606,1)+sot(666,597,1)+text(890,548,'U8',14)+text(116,664,'U5',14)+text(664,648,'U6',14);
 [[335,530],[525,530],[547,530]].forEach(([x,y])=>s+=chip(x,y,14,32,'#222',1));s+=text(350,530,'R10',17,90)+text(563,530,'R9',17,90)+chip(383,520,26,10,'#b78f80')+chip(493,518,26,10,'#b78f80')+text(383,541,'C34')+text(493,541,'C35');
 [[90,530],[157,530]].forEach(([x,y])=>s+=chip(x,y,17,32,'#fff',1));s+=chip(113,530,12,28,'#222',1)+chip(134,530,12,28,'#b78f80',1)+text(103,530,'R22',14,90)+text(141,530,'D19',14,90);
 [[661,507],[661,534],[262,598],[262,618],[262,638]].forEach(([x,y])=>s+=chip(x,y,30,15,'#fff'));s+=chip(705,533,28,10,'#222')+text(705,523,'R11',16)+box(245,585,38,64)+text(261,664,'D9');
 [332,362,391,420,450,479,509].forEach((x,i)=>s+=circ(x,628,17,D)+pad(x,628,11,i==6,4,'#444'));
 [464,479,494].forEach(x=>s+=pad(x,602,6,0,3,'#222'));s+=box(456,588,46,22)+text(434,602,'J4',17,90);
 [[202,545],[202,574],[202,603],[202,632],[202,690],[202,720],[202,749,1],[87,715],[87,743,1],[255,687],[255,716],[255,745,1],[562,685],[562,713],[562,741,1],[842,683],[842,712],[842,741,1],[779,690,1],[779,719,1],[780,575],[779,632],[965,585],[965,614],[964,643,1],[967,470],[967,498],[967,527],[958,709,1],[957,737],[825,290],[885,290],[943,288,1],[973,288,1],[78,322,1],[78,352],[78,412,1],[80,472]].forEach(a=>{const r=a[0]>770&&a[0]<830||a[0]<85?8:11;s+=circ(a[0],a[1],r+5,D)+pad(a[0],a[1],r,a[2],4,'#555')});
 [[314,562],[333,575],[364,568],[391,568],[425,567],[499,561],[545,567],[571,574],[334,590],[388,590],[452,584],[528,584],[308,615],[325,604],[362,602],[562,322],[533,350],[502,436],[317,429],[257,457],[333,500],[368,500],[655,550]].forEach(([x,y])=>s+=circ(x,y,7,D)+circ(x,y,2.500,'#8e9b72'));
 s+=cap(78,316,162,160,150,426,1,150,303)+cap(294,246,160,160,374,355,0,282,312)+cap(652,333,160,156,747,441,0,640,398)+cap(832,288,162,155,936,396,0,820,352);
 s+=text(355,235,'C32',20,0,'#fff')+text(712,322,'C31',19)+text(893,276,'C30',19);
 // ground grid passing in front of the board
 s+='</g><clipPath id="near"><rect x="1270" y="551" width="335" height="22"/></clipPath><g clip-path="url(#near)"><g transform="translate(1090 200) scale(.45918 .43367)" opacity=".8">';
 [810,817,825,834,844].forEach(y=>s+=gray(413,y,1108,y+2));s+=floor();
 return s+'</g></g>';
}
const axes=dx=>`<g transform="translate(${dx} 860) scale(.33333)"><defs><linearGradient id="ga${dx}" x2="1"><stop stop-color="#067a06"/><stop offset=".35" stop-color="#0f0"/><stop offset=".7" stop-color="#0f0"/><stop offset="1" stop-color="#067a06"/></linearGradient><linearGradient id="ra${dx}" x2="0" y2="1"><stop stop-color="#8a0000"/><stop offset=".4" stop-color="#f40000"/><stop offset=".7" stop-color="#f00"/><stop offset="1" stop-color="#700"/></linearGradient></defs><circle cx="186" cy="211" r="27" fill="#0000dc"/><rect x="102" y="196" width="82" height="33" fill="url(#ra${dx})"/><path d="M102 182q9 30 2 63l4-3V180z" fill="#600"/><path d="M39 212l64-32q-6 32 0 63z" fill="url(#ra${dx})"/><path d="M167 130h34v84h-20l-14-14z" fill="url(#ga${dx})"/><path d="M150 133q33 8 66 0l-33-67z" fill="url(#ga${dx})"/></g>`;
document.getElementById('left').innerHTML=leftBoard()+axes(0);
document.getElementById('right').innerHTML=rightBoard()+axes(960);
</script>
</body>
</html>
